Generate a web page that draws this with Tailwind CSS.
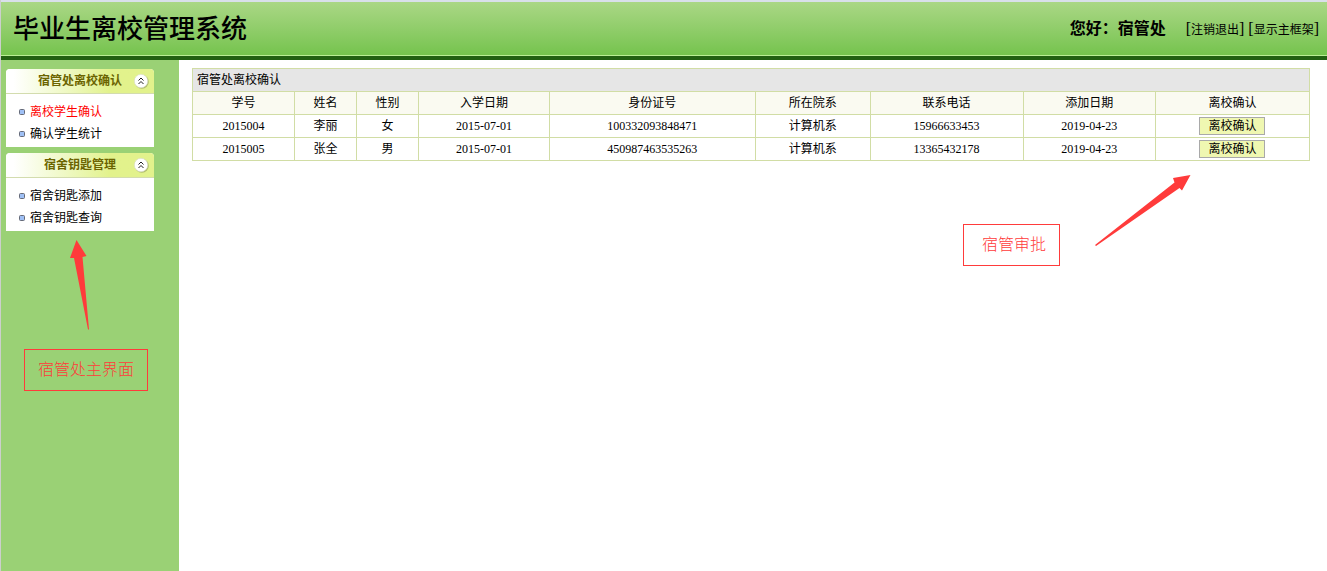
<!DOCTYPE html>
<html lang="zh-CN">
<head>
<meta charset="utf-8">
<meta name="viewport" content="width=device-width, initial-scale=1">
<title>毕业生离校管理系统</title>
<script src="https://cdn.jsdelivr.net/npm/@tailwindcss/browser@4"></script>
</head>
<body class="relative flex min-h-screen flex-col border-l border-[#cccfcc] bg-white font-['Liberation_Serif','Noto_Sans_CJK_SC',serif] text-xs text-black">

<header class="flex h-[60px] shrink-0 items-center justify-between border-t-2 border-b-4 border-t-[#d9e0ea] border-b-[#226012] bg-linear-to-b from-[#aad785] to-[#74c34c] pr-2 pl-3 shadow-[inset_0_-1px_0_#b9ee94]">
  <h1 class="pt-0.5 text-[26px] leading-8 font-medium">毕业生离校管理系统</h1>
  <div class="flex items-center gap-5">
    <p class="text-base font-bold">您好：宿管处</p>
    <nav class="text-base">[<a href="#logout" class="text-xs">注销退出</a>] [<a href="#frame" class="text-xs">显示主框架</a>]</nav>
  </div>
</header>

<div class="flex grow">
  <aside class="flex w-[178px] shrink-0 flex-col gap-1.5 bg-[#9ad175] pt-[9px] pr-[25px] pl-[5px]">
    <section class="rounded-t bg-white">
      <div class="relative flex h-[25px] items-center justify-center rounded-t border-b border-[#d3dcae] bg-linear-to-r from-white from-5% to-[#e2f28c] to-70%">
        <h2 class="font-bold text-[#6b6400]">宿管处离校确认</h2>
        <button type="button" aria-label="收起宿管处离校确认" class="absolute top-1 right-[5px] size-4">
          <svg viewBox="0 0 16 16" class="size-4 overflow-visible"><circle cx="8.8" cy="8.8" r="7" fill="#8f9a58" opacity=".6"/><circle cx="8" cy="8" r="6.7" fill="#fff" stroke="#d9dcc4" stroke-width=".6"/><path d="M5.500 7.500 8 5l2.500 2.500M5.500 11 8 8.500l2.500 2.500" fill="none" stroke="#222" stroke-width="1"/></svg>
        </button>
      </div>
      <ul class="pt-[7px] pb-0.5 pl-[13px] leading-[22px]">
        <li class="flex items-center gap-[5px]"><svg viewBox="0 0 6 6" class="size-1.5"><rect x=".5" y=".5" width="5" height="5" rx="1" fill="#9fc0f5" stroke="#666b78"/></svg><a href="#confirm" class="text-[#ff0000]">离校学生确认</a></li>
        <li class="flex items-center gap-[5px]"><svg viewBox="0 0 6 6" class="size-1.5"><rect x=".5" y=".5" width="5" height="5" rx="1" fill="#9fc0f5" stroke="#666b78"/></svg><a href="#stats">确认学生统计</a></li>
      </ul>
    </section>
    <section class="rounded-t bg-white">
      <div class="relative flex h-[25px] items-center justify-center rounded-t border-b border-[#d3dcae] bg-linear-to-r from-white from-5% to-[#e2f28c] to-70%">
        <h2 class="font-bold text-[#6b6400]">宿舍钥匙管理</h2>
        <button type="button" aria-label="收起宿舍钥匙管理" class="absolute top-1 right-[5px] size-4">
          <svg viewBox="0 0 16 16" class="size-4 overflow-visible"><circle cx="8.8" cy="8.8" r="7" fill="#8f9a58" opacity=".6"/><circle cx="8" cy="8" r="6.7" fill="#fff" stroke="#d9dcc4" stroke-width=".6"/><path d="M5.500 7.500 8 5l2.500 2.500M5.500 11 8 8.500l2.500 2.500" fill="none" stroke="#222" stroke-width="1"/></svg>
        </button>
      </div>
      <ul class="pt-[7px] pb-0.5 pl-[13px] leading-[22px]">
        <li class="flex items-center gap-[5px]"><svg viewBox="0 0 6 6" class="size-1.5"><rect x=".5" y=".5" width="5" height="5" rx="1" fill="#9fc0f5" stroke="#666b78"/></svg><a href="#key-add">宿舍钥匙添加</a></li>
        <li class="flex items-center gap-[5px]"><svg viewBox="0 0 6 6" class="size-1.5"><rect x=".5" y=".5" width="5" height="5" rx="1" fill="#9fc0f5" stroke="#666b78"/></svg><a href="#key-search">宿舍钥匙查询</a></li>
      </ul>
    </section>
  </aside>

  <main class="min-w-0 grow pt-2 pr-[17px] pl-[13px]">
    <table class="w-full table-fixed border-collapse text-center leading-4 [&_td]:border [&_td]:border-[#d1dda5] [&_td]:p-0 [&_th]:border [&_th]:border-[#d1dda5] [&_th]:p-0 [&_th]:font-normal [&_tr]:h-[23px]">
      <colgroup>
        <col class="w-[9.13%]"><col class="w-[5.55%]"><col class="w-[5.55%]"><col class="w-[11.72%]"><col class="w-[18.43%]"><col class="w-[10.29%]"><col class="w-[13.69%]"><col class="w-[11.85%]"><col>
      </colgroup>
      <thead>
        <tr class="bg-[#e6e6e6] text-left"><th colspan="9" scope="colgroup"><span class="pl-1">宿管处离校确认</span></th></tr>
        <tr class="bg-[#fafaf1]"><th scope="col">学号</th><th scope="col">姓名</th><th scope="col">性别</th><th scope="col">入学日期</th><th scope="col">身份证号</th><th scope="col">所在院系</th><th scope="col">联系电话</th><th scope="col">添加日期</th><th scope="col">离校确认</th></tr>
      </thead>
      <tbody>
        <tr><td>2015004</td><td>李丽</td><td>女</td><td>2015-07-01</td><td>100332093848471</td><td>计算机系</td><td>15966633453</td><td>2019-04-23</td><td><button type="button" class="mx-auto block h-[18px] w-[66px] border border-[#a9a9a9] bg-[#eff7b1] leading-4">离校确认</button></td></tr>
        <tr><td>2015005</td><td>张全</td><td>男</td><td>2015-07-01</td><td>450987463535263</td><td>计算机系</td><td>13365432178</td><td>2019-04-23</td><td><button type="button" class="mx-auto block h-[18px] w-[66px] border border-[#a9a9a9] bg-[#eff7b1] leading-4">离校确认</button></td></tr>
      </tbody>
    </table>
  </main>
</div>

<!-- Callouts laid over the page -->
<svg viewBox="0 0 20 92" class="absolute top-[239px] left-[68px] h-[92px] w-5 overflow-visible"><path d="M7.500 1 17.500 17 13.500 18 20 90.500 19 90.500 5 19 1 19Z" fill="#ff3b3b"/></svg>
<p class="absolute top-[349px] left-[23px] border border-[#ff3b3b] px-[13px] py-2 text-base leading-6 font-light whitespace-nowrap text-[#ff3b3b]">宿管处主界面</p>
<p class="absolute top-[224px] right-[267px] border border-[#ff3b3b] py-2 pr-[13px] pl-[18px] text-base leading-6 font-light whitespace-nowrap text-[#ff3b3b]">宿管审批</p>
<svg viewBox="0 0 96 72" class="absolute top-[175px] right-[136px] h-[72px] w-24 overflow-visible"><path d="M95.500 0 87 15.500 84.500 13 1 71 0 70 79.500 7.500 78 3Z" fill="#ff3b3b"/></svg>
</body>
</html>
